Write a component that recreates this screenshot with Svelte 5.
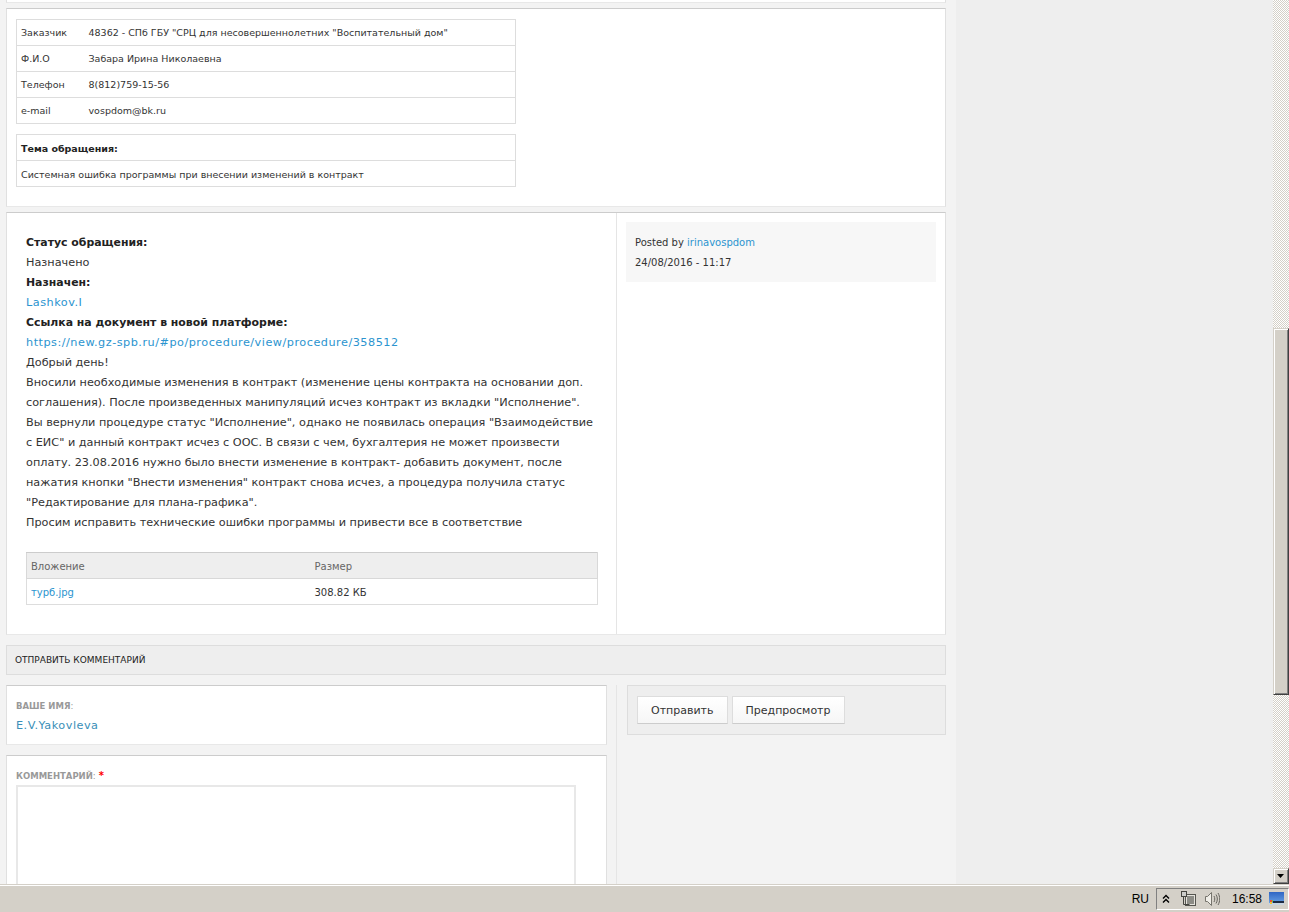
<script>
	const contact = [
		['Заказчик', '48362 - СПб ГБУ "СРЦ для несовершеннолетних "Воспитательный дом"'],
		['Ф.И.О', 'Забара Ирина Николаевна'],
		['Телефон', '8(812)759-15-56'],
		['e-mail', 'vospdom@bk.ru']
	]

	const message = [
		'Добрый день!',
		'Вносили необходимые изменения в контракт (изменение цены контракта на основании доп.',
		'соглашения). После произведенных манипуляций исчез контракт из вкладки "Исполнение".',
		'Вы вернули процедуре статус "Исполнение", однако не появилась операция "Взаимодействие',
		'с ЕИС" и данный контракт исчез с ООС. В связи с чем, бухгалтерия не может произвести',
		'оплату. 23.08.2016 нужно было внести изменение в контракт- добавить документ, после',
		'нажатия кнопки "Внести изменения" контракт снова исчез, а процедура получила статус',
		'"Редактирование для плана-графика".',
		'Просим исправить технические ошибки программы и привести все в соответствие'
	]
</script>

<div class="screen">
	<div class="desk">
		<main>
			<div class="sliver"></div>

			<section class="card info">
				<table class="grid contact">
					<tbody>
						{#each contact as row}
							<tr>
								<td class="key">{row[0]}</td>
								<td>{row[1]}</td>
							</tr>
						{/each}
					</tbody>
				</table>
				<table class="grid topic">
					<tbody>
						<tr><th>Тема обращения:</th></tr>
						<tr><td>Системная ошибка программы при внесении изменений в контракт</td></tr>
					</tbody>
				</table>
			</section>

			<section class="card post">
				<div class="post-body">
					<div class="text">
						<b>Статус обращения:</b>
						<div>Назначено</div>
						<b>Назначен:</b>
						<div><a href="#user">Lashkov.I</a></div>
						<b>Ссылка на документ в новой платформе:</b>
						<div><a href="#doc">https://new.gz-spb.ru/#po/procedure/view/procedure/358512</a></div>
						{#each message as line}
							<div>{line}</div>
						{/each}
					</div>
					<table class="grid files">
						<thead>
							<tr><th class="name">Вложение</th><th>Размер</th></tr>
						</thead>
						<tbody>
							<tr><td><a href="#file">турб.jpg</a></td><td>308.82 КБ</td></tr>
						</tbody>
					</table>
				</div>
				<aside class="post-side">
					<div class="meta">
						<div>Posted by <a href="#author">irinavospdom</a></div>
						<div>24/08/2016 - 11:17</div>
					</div>
				</aside>
			</section>

			<h2>ОТПРАВИТЬ КОММЕНТАРИЙ</h2>

			<div class="form">
				<div class="form-main">
					<div class="card field name-field">
						<div class="label">ВАШЕ ИМЯ<span>:</span></div>
						<a class="who" href="#me">E.V.Yakovleva</a>
					</div>
					<div class="card field comment-field">
						<div class="label">КОММЕНТАРИЙ<span>:</span> <i>*</i></div>
						<div class="textarea"></div>
					</div>
				</div>
				<div class="form-side">
					<div class="actions">
						<button>Отправить</button>
						<button>Предпросмотр</button>
					</div>
				</div>
			</div>
		</main>
		<div class="rail"></div>
		<div class="scrollbar">
			<div class="track"></div>
			<div class="thumb"></div>
			<div class="track rest"></div>
			<div class="arrow">
				<svg width="8" height="5" viewBox="0 0 8 5"><path d="M0 0h7L3.5 4z" fill="#000" /></svg>
			</div>
		</div>
	</div>

	<footer>
		<span class="lang">RU</span>
		<div class="tray">
			<svg class="chev" width="8" height="10" viewBox="0 0 8 10" fill="none" stroke="#000" stroke-width="1.4">
				<path d="M1 4.500l3-3 3 3M1 8.500l3-3 3 3" />
			</svg>
			<svg class="net" width="16" height="16" viewBox="0 0 16 16">
				<rect x="5.500" y="3.500" width="10" height="11" fill="#e4e2dc" stroke="#55554f" />
				<rect x="7" y="5" width="7" height="8" fill="#8c8c86" />
				<path d="M3.500 4v9.500h6" fill="none" stroke="#44443f" />
				<rect x="1.500" y="0.500" width="5" height="5" fill="#fff" stroke="#44443f" />
				<path d="M3 1v4M5 1v4" stroke="#9a9a94" />
			</svg>
			<svg class="vol" width="16" height="16" viewBox="0 0 16 16" fill="none">
				<path d="M1.500 5.500h2l4-4v13l-4-4h-2z" fill="#f0eee8" stroke="#76746d" />
				<path d="M10 5c1 2 1 4 0 6M12 3.500c1.800 3 1.800 6 0 9M14 2c2.300 4 2.300 8 0 12" stroke="#66645e" />
			</svg>
			<span class="clock">16:58</span>
			<svg class="desktop" width="15" height="13" viewBox="0 0 15 13">
				<defs>
					<linearGradient id="sky" x1="0" y1="0" x2="0" y2="1">
						<stop offset="0" stop-color="#2f66c4" />
						<stop offset="1" stop-color="#6fa8e8" />
					</linearGradient>
				</defs>
				<rect width="15" height="13" fill="url(#sky)" />
				<rect x="4" y="9" width="11" height="2" fill="#1d2b44" />
				<rect y="11" width="15" height="2" fill="#c8d4e0" />
				<rect x="1" y="8" width="2" height="2" fill="#e8503a" />
				<rect x="3" y="8" width="1" height="2" fill="#6fbf4a" />
				<rect x="1" y="10" width="2" height="2" fill="#f2c230" />
			</svg>
		</div>
	</footer>
</div>

<style>
	:global(body) {
		margin: 0;
		overflow: hidden;
	}
	.screen {
		display: flex;
		flex-direction: column;
		height: 912px;
		font-family: "DejaVu Sans", Verdana, sans-serif;
		font-size: 10px;
		color: #333;
		overflow: hidden;
	}
	.desk {
		display: flex;
		flex: 1;
		min-height: 0;
	}
	main {
		box-sizing: border-box;
		width: 956px;
		padding: 0 10px 0 6px;
		background: #f3f3f3;
		overflow: hidden;
	}
	.rail {
		flex: 1;
		background: #eee;
	}
	a {
		color: #2b94cf;
		text-decoration: none;
	}
	.sliver {
		height: 2px;
		background: #fff;
		border-bottom: 1px solid #e8e8e8;
		border-left: 1px solid #e0e0e0;
		border-right: 1px solid #e0e0e0;
		margin-bottom: 5px;
	}
	.card {
		background: #fff;
		border: 1px solid #e0e0e0;
		border-top-color: #ccc;
		border-bottom-color: #e8e8e8;
		box-sizing: border-box;
	}

	/* tables */
	.grid {
		border-collapse: collapse;
		background: #fff;
		font-size: 9.500px;
	}
	.grid td,
	.grid th {
		box-sizing: border-box;
		border: 1px solid #ddd;
		height: 26px;
		padding: 1px 4px 0;
		text-align: left;
		white-space: nowrap;
	}
	.info {
		height: 199px;
		padding: 10px 9px 0;
		margin-bottom: 5px;
	}
	.contact,
	.topic {
		width: 500px;
	}
	.contact td {
		padding-top: 0;
	}
	.contact .key {
		width: 68px;
		border-right: 0;
	}
	.contact .key + td {
		border-left: 0;
	}
	.topic {
		margin-top: 10px;
	}
	.topic th {
		font-weight: bold;
		color: #222;
	}

	/* post */
	.post {
		display: flex;
		height: 423px;
		margin-bottom: 10px;
	}
	.post-body {
		box-sizing: border-box;
		width: 610px;
		padding: 20px 18px 0 19px;
		border-right: 1px solid #e5e5e5;
	}
	.text {
		font-size: 11.250px;
		line-height: 20px;
		white-space: nowrap;
	}
	.text b {
		display: block;
		font-size: 10.900px;
		color: #222;
	}
	.text a {
		letter-spacing: .5px;
	}
	.files {
		width: 572px;
		margin-top: 19px;
		font-size: 10px;
	}
	.files th {
		background: #eee;
		font-weight: normal;
		color: #666;
		border-color: #d8d8d8;
		border-top-color: #ccc;
	}
	.files .name {
		width: 284px;
	}
	.files th:first-child,
	.files td:first-child {
		border-right: 0;
	}
	.files th:last-child,
	.files td:last-child {
		border-left: 0;
	}
	.post-side {
		flex: 1;
		padding: 9px 9px 0;
	}
	.meta {
		height: 60px;
		box-sizing: border-box;
		padding: 11px 9px 9px;
		background: #f7f7f7;
		line-height: 20px;
	}

	h2 {
		box-sizing: border-box;
		height: 30px;
		margin: 0 0 10px;
		padding: 0 8px;
		background: #eee;
		border: 1px solid #ddd;
		font-size: 9px;
		font-weight: normal;
		line-height: 29px;
		color: #222;
	}

	/* form */
	.form {
		display: flex;
		height: 300px;
	}
	.form-main {
		width: 611px;
		box-sizing: border-box;
		padding-right: 9px;
		border-right: 1px solid #e5e5e5;
	}
	.field {
		padding: 14px 9px 0;
	}
	.name-field {
		height: 60px;
		margin-bottom: 10px;
	}
	.comment-field {
		height: 240px;
	}
	.label {
		font-size: 8.500px;
		font-weight: bold;
		line-height: 12px;
		color: #999;
	}
	.label span {
		font-weight: normal;
	}
	.label i {
		font-style: normal;
		font-size: 10px;
		font-weight: bold;
		color: #f00;
	}
	.who {
		display: block;
		margin-top: 7px;
		font-size: 11.250px;
		letter-spacing: .5px;
		line-height: 14px;
		color: #3a8fb8;
	}
	.textarea {
		box-sizing: border-box;
		width: 560px;
		height: 200px;
		margin-top: 3px;
		border: 2px solid #e8e8e8;
		background: #fff;
	}
	.form-side {
		flex: 1;
		padding-left: 10px;
	}
	.actions {
		display: flex;
		gap: 4px;
		height: 50px;
		box-sizing: border-box;
		padding: 10px 9px;
		background: #eee;
		border: 1px solid #ddd;
	}
	button {
		height: 28px;
		padding: 0 13px;
		background: linear-gradient(#fff, #f6f6f6);
		border: 1px solid #ddd;
		border-bottom-color: #ccc;
		font-family: inherit;
		font-size: 11px;
		color: #333;
	}

	/* windows chrome */
	.scrollbar {
		display: flex;
		flex-direction: column;
		width: 16px;
	}
	.track {
		height: 328px;
		background: repeating-conic-gradient(#d4d0c8 0 25%, #fff 0 50%) 0 0 / 2px 2px;
	}
	.track.rest {
		flex: 1;
		height: auto;
	}
	.thumb {
		box-sizing: border-box;
		height: 367px;
		background: #d4d0c8;
		border: 1px solid;
		border-color: #d4d0c8 #404040 #404040 #d4d0c8;
		box-shadow: inset 1px 1px 0 #fff, inset -1px -1px 0 #808080;
	}
	.arrow {
		box-sizing: border-box;
		display: flex;
		align-items: center;
		justify-content: center;
		height: 16px;
		background: #d4d0c8;
		border: 1px solid;
		border-color: #d4d0c8 #404040 #404040 #d4d0c8;
		box-shadow: inset 1px 1px 0 #fff, inset -1px -1px 0 #808080;
	}
	footer {
		box-sizing: border-box;
		display: flex;
		align-items: center;
		justify-content: flex-end;
		height: 28px;
		background: #d4d0c8;
		border-top: 1px solid #d4d0c8;
		box-shadow: inset 0 1px 0 #fff;
		font-family: "Liberation Sans", Arial, sans-serif;
		font-size: 12px;
		color: #000;
	}
	.lang {
		margin-right: 5px;
	}
	.tray {
		box-sizing: border-box;
		display: flex;
		align-items: center;
		width: 133px;
		height: 22px;
		margin-left: 2px;
		padding-left: 5px;
		border: 1px solid;
		border-color: #808080 #fff #fff #808080;
	}
	.chev {
		margin-right: 10px;
	}
	.net {
		margin-right: 8px;
	}
	.vol {
		margin-right: 12px;
	}
	.clock {
		margin-right: 7px;
	}
</style>
